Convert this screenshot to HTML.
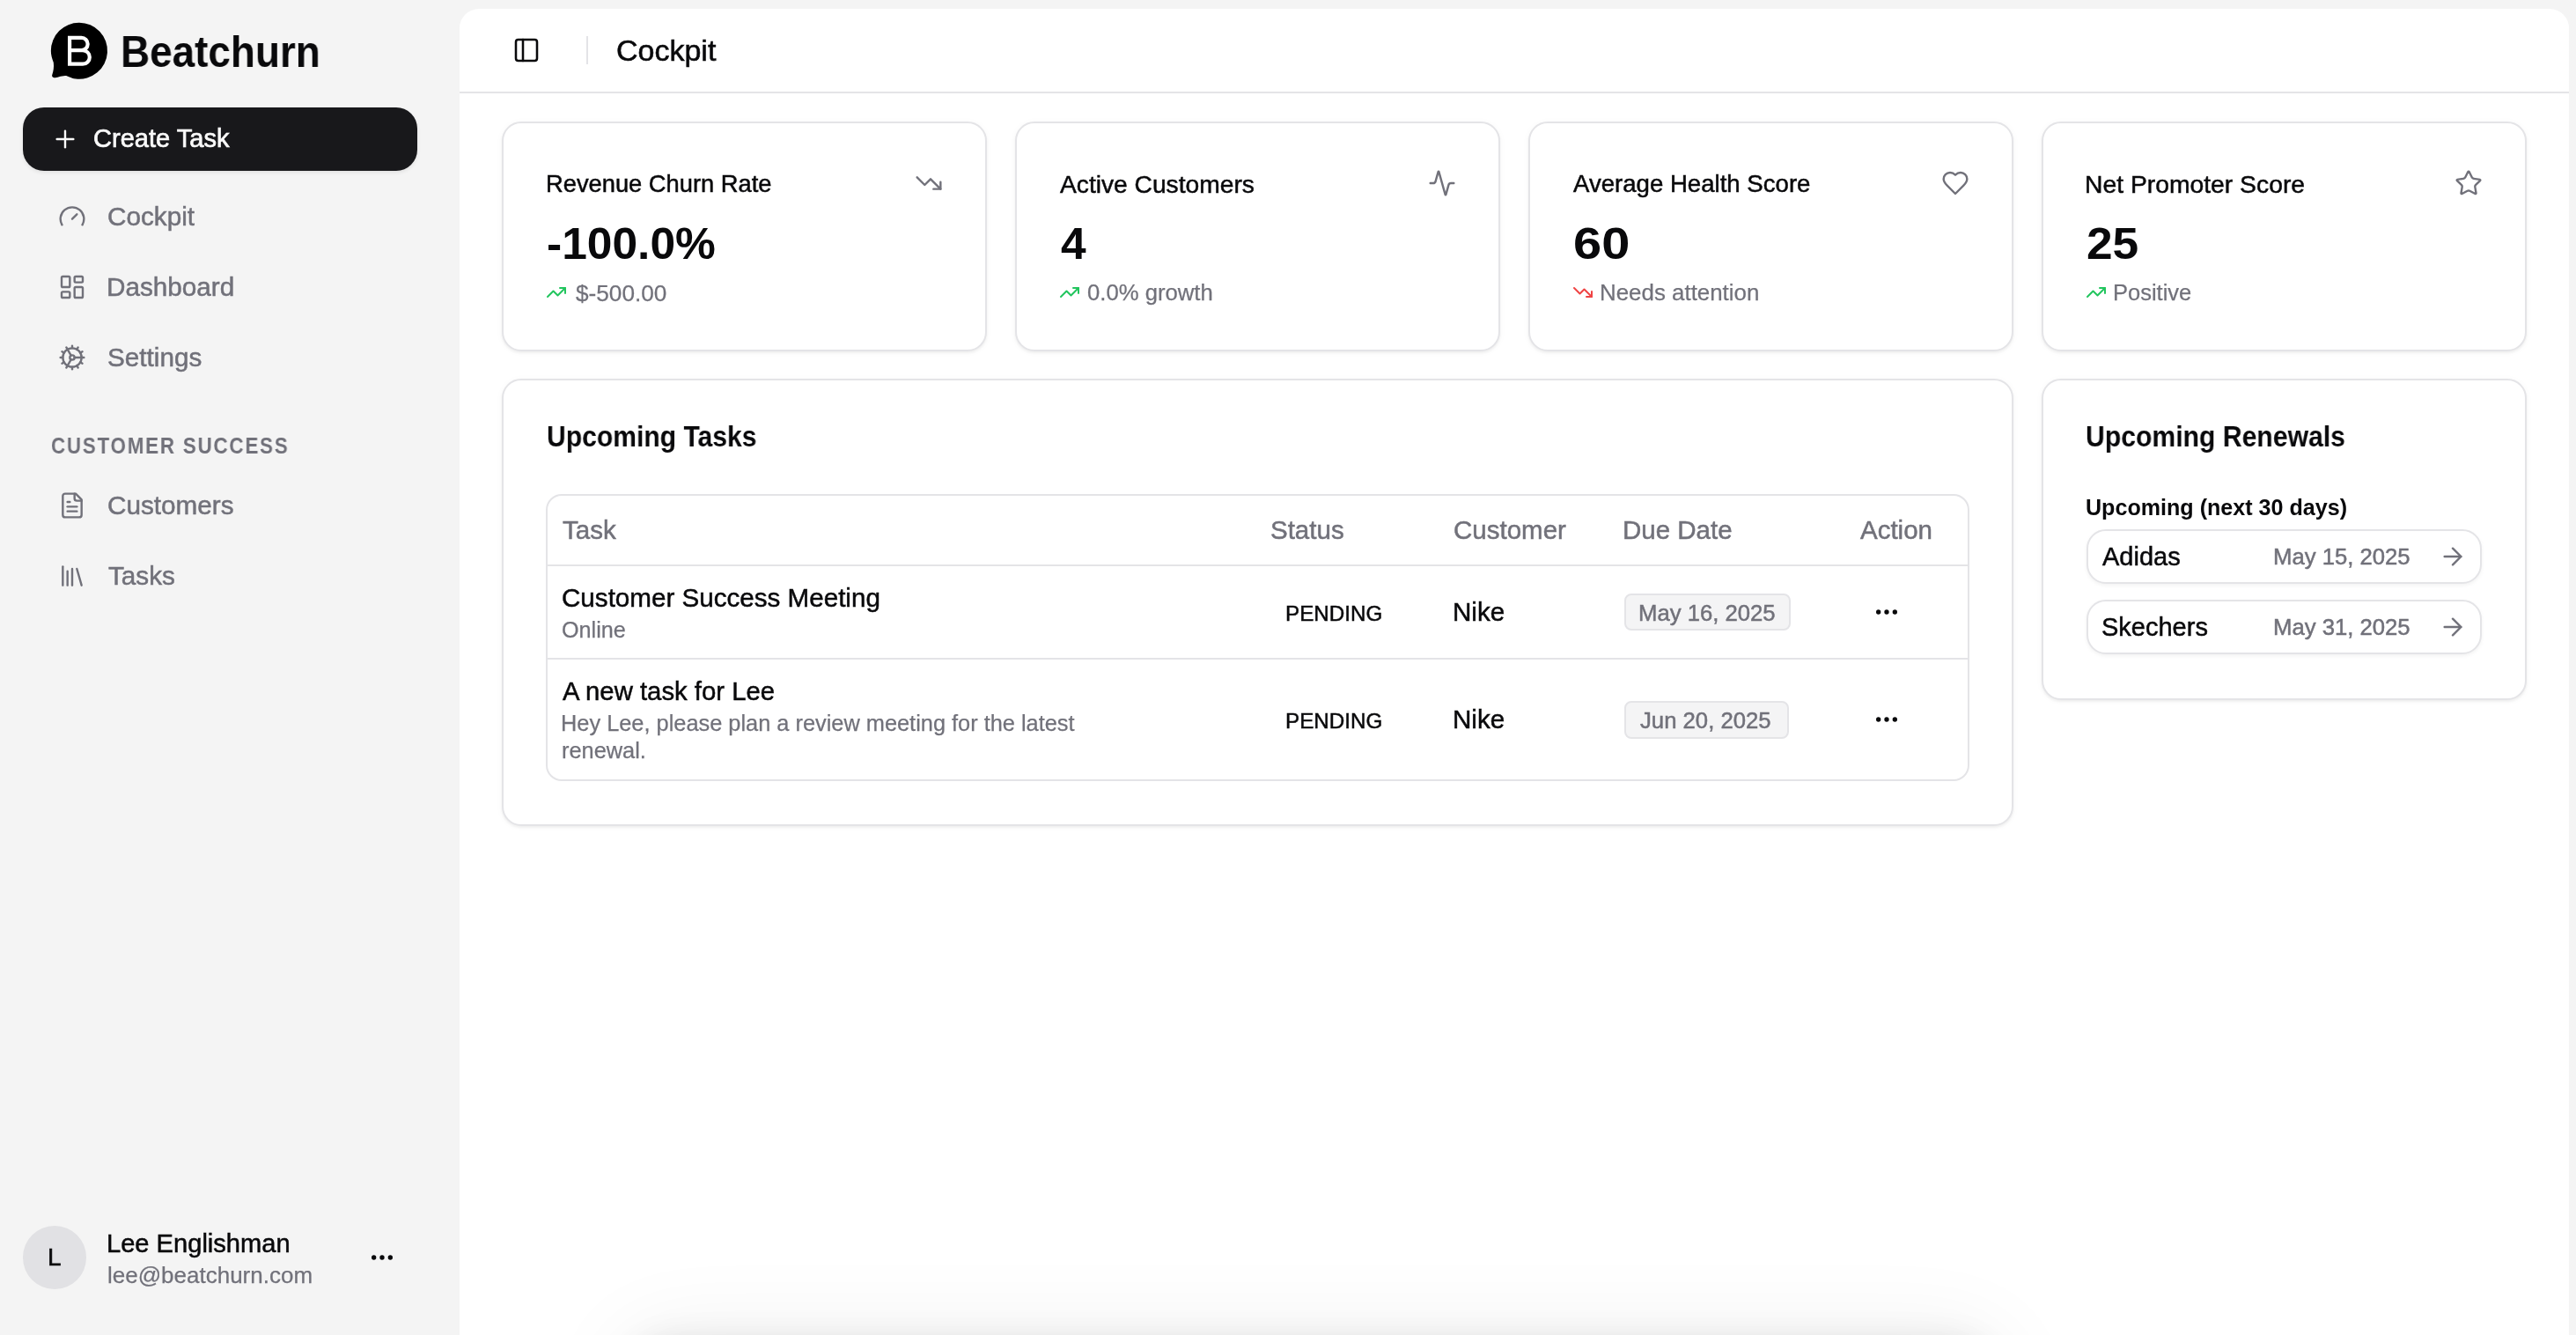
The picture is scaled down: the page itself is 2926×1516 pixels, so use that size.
<!DOCTYPE html>
<html><head><meta charset="utf-8"><title>Beatchurn - Cockpit</title>
<style>
html,body{margin:0;padding:0;}
body{width:2926px;height:1516px;overflow:hidden;position:relative;background:#f4f4f4;font-family:"Liberation Sans",sans-serif;}
.t{position:absolute;white-space:nowrap;line-height:1;will-change:transform;}
.b{position:absolute;}
.i{position:absolute;overflow:visible;}
</style></head><body>
<div class="b" style="left:522px;top:10px;width:2396px;height:1690px;background:#fff;border-radius:22px;"></div>
<svg class="i" style="left:0;top:0;width:200px;height:100px" viewBox="0 0 200 100">
<path d="M89.85,25.75 A32,32 0 1 1 86,89.5 C80,88.5 77,85.8 74,85.9 C69,86 64,88.5 61.5,88.3 C59.5,88.1 58.6,86.5 59.3,84.8 C60.6,81 61.5,76 60.8,70.9 C59,66.5 57.85,62 57.85,57.75 A32,32 0 0 1 89.85,25.75 Z" fill="#000"/>
<path d="M79.1,42.8 H92.5 A7.15,7.15 0 0 1 92.5,57.1 H79.1 Z M79.1,57.1 H94 A7.8,7.8 0 0 1 94,72.7 H79.1 Z" fill="none" stroke="#fff" stroke-width="4.2" stroke-linejoin="miter"/>
</svg>
<div class="b" style="left:522px;top:104px;width:2396px;height:2px;background:#e4e4e7;"></div>
<div class="b" style="left:666px;top:41.3px;width:2px;height:31.5px;background:#e4e4e7;"></div>
<div class="b" style="left:26px;top:122px;width:448px;height:72px;background:#18181b;border-radius:24px;box-shadow:0 2px 4px rgba(0,0,0,0.08);"></div>
<div class="b" style="left:26.1px;top:1392.1px;width:71.6px;height:71.6px;background:#e1e1e4;border-radius:50%;"></div>
<div class="b" style="left:569.7px;top:138px;width:550.9px;height:260.5px;background:#fff;border:2px solid #e4e4e7;border-radius:22px;box-shadow:0 2px 3px rgba(0,0,0,0.05), 0 1px 8px rgba(0,0,0,0.03);box-sizing:border-box;"></div>
<div class="b" style="left:1152.9px;top:138px;width:550.9px;height:260.5px;background:#fff;border:2px solid #e4e4e7;border-radius:22px;box-shadow:0 2px 3px rgba(0,0,0,0.05), 0 1px 8px rgba(0,0,0,0.03);box-sizing:border-box;"></div>
<div class="b" style="left:1736.1px;top:138px;width:550.9px;height:260.5px;background:#fff;border:2px solid #e4e4e7;border-radius:22px;box-shadow:0 2px 3px rgba(0,0,0,0.05), 0 1px 8px rgba(0,0,0,0.03);box-sizing:border-box;"></div>
<div class="b" style="left:2319px;top:138px;width:550.9px;height:260.5px;background:#fff;border:2px solid #e4e4e7;border-radius:22px;box-shadow:0 2px 3px rgba(0,0,0,0.05), 0 1px 8px rgba(0,0,0,0.03);box-sizing:border-box;"></div>
<div class="b" style="left:569.7px;top:430px;width:1717.5px;height:507.5px;background:#fff;border:2px solid #e4e4e7;border-radius:22px;box-shadow:0 2px 3px rgba(0,0,0,0.05), 0 1px 8px rgba(0,0,0,0.03);box-sizing:border-box;"></div>
<div class="b" style="left:2319px;top:430px;width:550.9px;height:364.75px;background:#fff;border:2px solid #e4e4e7;border-radius:22px;box-shadow:0 2px 3px rgba(0,0,0,0.05), 0 1px 8px rgba(0,0,0,0.03);box-sizing:border-box;"></div>
<div class="b" style="left:620.25px;top:560.5px;width:1616.35px;height:326.5px;border:2px solid #e4e4e7;border-radius:18px;box-sizing:border-box;"></div>
<div class="b" style="left:622.25px;top:641px;width:1612.35px;height:2px;background:#e4e4e7;"></div>
<div class="b" style="left:622.25px;top:747px;width:1612.35px;height:2px;background:#e4e4e7;"></div>
<div class="b" style="left:1844.8px;top:673.5px;width:189.4px;height:42.9px;background:#f4f4f5;border:2px solid #e4e4e7;border-radius:8px;box-sizing:border-box;"></div>
<div class="b" style="left:1844.8px;top:795.8px;width:186.9px;height:42.9px;background:#f4f4f5;border:2px solid #e4e4e7;border-radius:8px;box-sizing:border-box;"></div>
<div class="b" style="left:2370px;top:600.6px;width:449.1px;height:62.1px;background:#fff;border:2px solid #e4e4e7;border-radius:22px;box-sizing:border-box;box-shadow:0 2px 4px rgba(0,0,0,0.05);"></div>
<div class="b" style="left:2370px;top:680.7px;width:449.1px;height:62px;background:#fff;border:2px solid #e4e4e7;border-radius:22px;box-sizing:border-box;box-shadow:0 2px 4px rgba(0,0,0,0.05);"></div>
<div class="b" style="left:720px;top:1530px;width:1540px;height:110px;background:#fff;border-radius:40px;box-shadow:0 0 40px 4px rgba(0,0,0,0.12), 0 0 100px 20px rgba(0,0,0,0.06);"></div>
<svg class="i" style="left:57.7px;top:141.7px;width:32px;height:32px" viewBox="0 0 24 24" fill="none" stroke="#fafafa" stroke-width="1.8" stroke-linecap="round" stroke-linejoin="round"><path d="M5 12h14"/><path d="M12 5v14"/></svg>
<svg class="i" style="left:66px;top:230px;width:32px;height:32px" viewBox="0 0 24 24" fill="none" stroke="#71717a" stroke-width="1.8" stroke-linecap="round" stroke-linejoin="round"><path d="m12 14 4-4"/><path d="M3.34 19a10 10 0 1 1 17.32 0"/></svg>
<svg class="i" style="left:66px;top:310px;width:32px;height:32px" viewBox="0 0 24 24" fill="none" stroke="#71717a" stroke-width="1.8" stroke-linecap="round" stroke-linejoin="round"><rect width="7" height="9" x="3" y="3" rx="1"/><rect width="7" height="5" x="14" y="3" rx="1"/><rect width="7" height="9" x="14" y="12" rx="1"/><rect width="7" height="5" x="3" y="16" rx="1"/></svg>
<svg class="i" style="left:66px;top:390px;width:32px;height:32px" viewBox="0 0 24 24" fill="none" stroke="#71717a" stroke-width="1.8" stroke-linecap="round" stroke-linejoin="round"><path d="M12 20a8 8 0 1 0 0-16 8 8 0 0 0 0 16Z"/><path d="M12 14a2 2 0 1 0 0-4 2 2 0 0 0 0 4Z"/><path d="M12 2v2"/><path d="M12 22v-2"/><path d="m17 20.66-1-1.73"/><path d="M11 10.27 7 3.34"/><path d="m20.66 17-1.73-1"/><path d="m3.34 7 1.73 1"/><path d="M14 12h8"/><path d="M2 12h2"/><path d="m20.66 7-1.73 1"/><path d="m3.34 17 1.73-1"/><path d="m17 3.34-1 1.73"/><path d="m11 13.73-4 6.93"/></svg>
<svg class="i" style="left:66px;top:557.5px;width:32px;height:32px" viewBox="0 0 24 24" fill="none" stroke="#71717a" stroke-width="1.8" stroke-linecap="round" stroke-linejoin="round"><path d="M15 2H6a2 2 0 0 0-2 2v16a2 2 0 0 0 2 2h12a2 2 0 0 0 2-2V7Z"/><path d="M14 2v4a2 2 0 0 0 2 2h4"/><path d="M10 9H8"/><path d="M16 13H8"/><path d="M16 17H8"/></svg>
<svg class="i" style="left:66px;top:638px;width:32px;height:32px" viewBox="0 0 24 24" fill="none" stroke="#71717a" stroke-width="1.8" stroke-linecap="round" stroke-linejoin="round"><path d="m16 6 4 14"/><path d="M12 6v14"/><path d="M8 8v12"/><path d="M4 4v16"/></svg>
<svg class="i" style="left:418px;top:1412px;width:32px;height:32px" viewBox="0 0 24 24" fill="none" stroke="#09090b" stroke-width="2" stroke-linecap="round" stroke-linejoin="round"><circle cx="12" cy="12" r="1"/><circle cx="19" cy="12" r="1"/><circle cx="5" cy="12" r="1"/></svg>
<svg class="i" style="left:582.2px;top:40.8px;width:32px;height:32px" viewBox="0 0 24 24" fill="none" stroke="#09090b" stroke-width="1.9" stroke-linecap="round" stroke-linejoin="round"><rect width="18" height="18" x="3" y="3" rx="2"/><path d="M9 3v18"/></svg>
<svg class="i" style="left:1038.8px;top:192px;width:32px;height:32px" viewBox="0 0 24 24" fill="none" stroke="#71717a" stroke-width="1.8" stroke-linecap="round" stroke-linejoin="round"><polyline points="22 17 13.5 8.5 8.5 13.5 2 7"/><polyline points="16 17 22 17 22 11"/></svg>
<svg class="i" style="left:1621.5px;top:192px;width:32px;height:32px" viewBox="0 0 24 24" fill="none" stroke="#71717a" stroke-width="1.8" stroke-linecap="round" stroke-linejoin="round"><path d="M22 12h-2.48a2 2 0 0 0-1.93 1.46l-2.35 8.36a.25.25 0 0 1-.48 0L9.24 2.18a.25.25 0 0 0-.48 0l-2.35 8.36A2 2 0 0 1 4.49 12H2"/></svg>
<svg class="i" style="left:2204.9px;top:192px;width:32px;height:32px" viewBox="0 0 24 24" fill="none" stroke="#71717a" stroke-width="1.8" stroke-linecap="round" stroke-linejoin="round"><path d="M19 14c1.49-1.46 3-3.21 3-5.5A5.5 5.5 0 0 0 16.5 3c-1.76 0-3 .5-4.5 2-1.5-1.5-2.74-2-4.5-2A5.5 5.5 0 0 0 2 8.5c0 2.3 1.5 4.05 3 5.5l7 7Z"/></svg>
<svg class="i" style="left:2788.3px;top:192px;width:32px;height:32px" viewBox="0 0 24 24" fill="none" stroke="#71717a" stroke-width="1.8" stroke-linecap="round" stroke-linejoin="round"><path d="M11.525 2.295a.53.53 0 0 1 .95 0l2.31 4.679a2.123 2.123 0 0 0 1.595 1.16l5.166.756a.53.53 0 0 1 .294.904l-3.736 3.638a2.123 2.123 0 0 0-.611 1.878l.882 5.14a.53.53 0 0 1-.771.56l-4.618-2.428a2.122 2.122 0 0 0-1.973 0L6.396 21.01a.53.53 0 0 1-.77-.56l.881-5.139a2.122 2.122 0 0 0-.611-1.879L2.16 9.795a.53.53 0 0 1 .294-.906l5.165-.755a2.122 2.122 0 0 0 1.597-1.16z"/></svg>
<svg class="i" style="left:620px;top:320px;width:24px;height:24px" viewBox="0 0 24 24" fill="none" stroke="#22c55e" stroke-width="2" stroke-linecap="round" stroke-linejoin="round"><polyline points="22 7 13.5 15.5 8.5 10.5 2 17"/><polyline points="16 7 22 7 22 13"/></svg>
<svg class="i" style="left:1202.5px;top:320px;width:24px;height:24px" viewBox="0 0 24 24" fill="none" stroke="#22c55e" stroke-width="2" stroke-linecap="round" stroke-linejoin="round"><polyline points="22 7 13.5 15.5 8.5 10.5 2 17"/><polyline points="16 7 22 7 22 13"/></svg>
<svg class="i" style="left:1785.5px;top:320px;width:24px;height:24px" viewBox="0 0 24 24" fill="none" stroke="#ef4444" stroke-width="2" stroke-linecap="round" stroke-linejoin="round"><polyline points="22 17 13.5 8.5 8.5 13.5 2 7"/><polyline points="16 17 22 17 22 11"/></svg>
<svg class="i" style="left:2368.5px;top:320px;width:24px;height:24px" viewBox="0 0 24 24" fill="none" stroke="#22c55e" stroke-width="2" stroke-linecap="round" stroke-linejoin="round"><polyline points="22 7 13.5 15.5 8.5 10.5 2 17"/><polyline points="16 7 22 7 22 13"/></svg>
<svg class="i" style="left:2127px;top:679px;width:32px;height:32px" viewBox="0 0 24 24" fill="none" stroke="#09090b" stroke-width="2" stroke-linecap="round" stroke-linejoin="round"><circle cx="12" cy="12" r="1"/><circle cx="19" cy="12" r="1"/><circle cx="5" cy="12" r="1"/></svg>
<svg class="i" style="left:2127px;top:801px;width:32px;height:32px" viewBox="0 0 24 24" fill="none" stroke="#09090b" stroke-width="2" stroke-linecap="round" stroke-linejoin="round"><circle cx="12" cy="12" r="1"/><circle cx="19" cy="12" r="1"/><circle cx="5" cy="12" r="1"/></svg>
<svg class="i" style="left:2770px;top:616px;width:32px;height:32px" viewBox="0 0 24 24" fill="none" stroke="#71717a" stroke-width="1.8" stroke-linecap="round" stroke-linejoin="round"><path d="M5 12h14"/><path d="m12 5 7 7-7 7"/></svg>
<svg class="i" style="left:2770px;top:696px;width:32px;height:32px" viewBox="0 0 24 24" fill="none" stroke="#71717a" stroke-width="1.8" stroke-linecap="round" stroke-linejoin="round"><path d="M5 12h14"/><path d="m12 5 7 7-7 7"/></svg>
<div class="t" style="left:137.22px;top:34.39px;font-size:49.5px;font-weight:bold;color:#09090b;transform:scaleX(0.9267);transform-origin:0 0;">Beatchurn</div>
<div class="t" style="left:105.80px;top:143.45px;font-size:29.0px;font-weight:normal;color:#fafafa;transform:scaleX(1.0024);transform-origin:0 0;-webkit-text-stroke:0.7px #fafafa;">Create Task</div>
<div class="t" style="left:121.70px;top:230.85px;font-size:29.7px;font-weight:normal;color:#71717a;-webkit-text-stroke:0.5px #71717a;">Cockpit</div>
<div class="t" style="left:120.70px;top:310.65px;font-size:29.7px;font-weight:normal;color:#71717a;-webkit-text-stroke:0.5px #71717a;">Dashboard</div>
<div class="t" style="left:121.70px;top:390.85px;font-size:29.7px;font-weight:normal;color:#71717a;-webkit-text-stroke:0.5px #71717a;">Settings</div>
<div class="t" style="left:121.70px;top:559.05px;font-size:29.7px;font-weight:normal;color:#71717a;-webkit-text-stroke:0.5px #71717a;">Customers</div>
<div class="t" style="left:122.70px;top:638.85px;font-size:29.7px;font-weight:normal;color:#71717a;-webkit-text-stroke:0.5px #71717a;">Tasks</div>
<div class="t" style="left:57.91px;top:494.23px;font-size:25px;font-weight:bold;color:#71717a;transform:scaleX(0.8944);transform-origin:0 0;letter-spacing:2px;">CUSTOMER SUCCESS</div>
<div class="t" style="left:53.50px;top:1414.29px;font-size:28px;font-weight:normal;color:#09090b;-webkit-text-stroke:0.6px #09090b;">L</div>
<div class="t" style="left:120.50px;top:1397.86px;font-size:29.1px;font-weight:normal;color:#09090b;-webkit-text-stroke:0.5px #09090b;">Lee Englishman</div>
<div class="t" style="left:121.50px;top:1434.99px;font-size:26px;font-weight:normal;color:#71717a;-webkit-text-stroke:0.25px #71717a;">lee@beatchurn.com</div>
<div class="t" style="left:700.10px;top:40.21px;font-size:34px;font-weight:normal;color:#09090b;-webkit-text-stroke:0.55px #09090b;">Cockpit</div>
<div class="t" style="left:619.50px;top:195.49px;font-size:27.3px;font-weight:normal;color:#09090b;-webkit-text-stroke:0.5px #09090b;">Revenue Churn Rate</div>
<div class="t" style="left:621.46px;top:251.89px;font-size:49.5px;font-weight:bold;color:#09090b;transform:scaleX(1.0408);transform-origin:0 0;">-100.0%</div>
<div class="t" style="left:653.80px;top:319.62px;font-size:26.2px;font-weight:normal;color:#71717a;-webkit-text-stroke:0.25px #71717a;">$-500.00</div>
<div class="t" style="left:1204.00px;top:194.72px;font-size:28.2px;font-weight:normal;color:#09090b;-webkit-text-stroke:0.5px #09090b;">Active Customers</div>
<div class="t" style="left:1205.00px;top:251.89px;font-size:49.5px;font-weight:bold;color:#09090b;transform:scaleX(1.0393);transform-origin:0 0;">4</div>
<div class="t" style="left:1235.30px;top:320.04px;font-size:25.7px;font-weight:normal;color:#71717a;-webkit-text-stroke:0.25px #71717a;">0.0% growth</div>
<div class="t" style="left:1787.00px;top:195.23px;font-size:27.6px;font-weight:normal;color:#09090b;-webkit-text-stroke:0.5px #09090b;">Average Health Score</div>
<div class="t" style="left:1786.83px;top:251.89px;font-size:49.5px;font-weight:bold;color:#09090b;transform:scaleX(1.1670);transform-origin:0 0;">60</div>
<div class="t" style="left:1817.30px;top:319.87px;font-size:25.9px;font-weight:normal;color:#71717a;-webkit-text-stroke:0.25px #71717a;">Needs attention</div>
<div class="t" style="left:2368.00px;top:194.64px;font-size:28.3px;font-weight:normal;color:#09090b;-webkit-text-stroke:0.5px #09090b;">Net Promoter Score</div>
<div class="t" style="left:2369.92px;top:251.89px;font-size:49.5px;font-weight:bold;color:#09090b;transform:scaleX(1.0760);transform-origin:0 0;">25</div>
<div class="t" style="left:2400.30px;top:320.21px;font-size:25.5px;font-weight:normal;color:#71717a;-webkit-text-stroke:0.25px #71717a;">Positive</div>
<div class="t" style="left:620.78px;top:480.43px;font-size:32.8px;font-weight:bold;color:#09090b;transform:scaleX(0.9171);transform-origin:0 0;">Upcoming Tasks</div>
<div class="t" style="left:638.80px;top:586.82px;font-size:29.5px;font-weight:normal;color:#71717a;-webkit-text-stroke:0.5px #71717a;">Task</div>
<div class="t" style="left:1443.40px;top:586.82px;font-size:29.5px;font-weight:normal;color:#71717a;-webkit-text-stroke:0.5px #71717a;">Status</div>
<div class="t" style="left:1650.60px;top:586.82px;font-size:29.5px;font-weight:normal;color:#71717a;-webkit-text-stroke:0.5px #71717a;">Customer</div>
<div class="t" style="left:1842.80px;top:586.82px;font-size:29.5px;font-weight:normal;color:#71717a;-webkit-text-stroke:0.5px #71717a;">Due Date</div>
<div class="t" style="left:2112.80px;top:586.82px;font-size:29.5px;font-weight:normal;color:#71717a;-webkit-text-stroke:0.5px #71717a;">Action</div>
<div class="t" style="left:637.80px;top:663.74px;font-size:29.6px;font-weight:normal;color:#09090b;-webkit-text-stroke:0.5px #09090b;">Customer Success Meeting</div>
<div class="t" style="left:637.80px;top:703.26px;font-size:25.2px;font-weight:normal;color:#71717a;-webkit-text-stroke:0.25px #71717a;">Online</div>
<div class="t" style="left:1460.10px;top:684.81px;font-size:24.2px;font-weight:normal;color:#09090b;-webkit-text-stroke:0.5px #09090b;">PENDING</div>
<div class="t" style="left:1649.60px;top:679.84px;font-size:29.6px;font-weight:normal;color:#09090b;-webkit-text-stroke:0.5px #09090b;">Nike</div>
<div class="t" style="left:1861.00px;top:683.64px;font-size:25.7px;font-weight:normal;color:#71717a;-webkit-text-stroke:0.5px #71717a;">May 16, 2025</div>
<div class="t" style="left:638.80px;top:769.69px;font-size:29.3px;font-weight:normal;color:#09090b;-webkit-text-stroke:0.5px #09090b;">A new task for Lee</div>
<div class="t" style="left:636.80px;top:808.53px;font-size:25.36px;font-weight:normal;color:#71717a;-webkit-text-stroke:0.25px #71717a;">Hey Lee, please plan a review meeting for the latest</div>
<div class="t" style="left:637.80px;top:839.83px;font-size:25.36px;font-weight:normal;color:#71717a;-webkit-text-stroke:0.25px #71717a;">renewal.</div>
<div class="t" style="left:1460.10px;top:807.11px;font-size:24.2px;font-weight:normal;color:#09090b;-webkit-text-stroke:0.5px #09090b;">PENDING</div>
<div class="t" style="left:1649.60px;top:802.14px;font-size:29.6px;font-weight:normal;color:#09090b;-webkit-text-stroke:0.5px #09090b;">Nike</div>
<div class="t" style="left:1863.00px;top:805.64px;font-size:25.7px;font-weight:normal;color:#71717a;-webkit-text-stroke:0.5px #71717a;">Jun 20, 2025</div>
<div class="t" style="left:2369.08px;top:480.23px;font-size:32.8px;font-weight:bold;color:#09090b;transform:scaleX(0.9193);transform-origin:0 0;">Upcoming Renewals</div>
<div class="t" style="left:2369.00px;top:563.85px;font-size:25.1px;font-weight:bold;color:#09090b;">Upcoming (next 30 days)</div>
<div class="t" style="left:2388.30px;top:617.65px;font-size:29px;font-weight:normal;color:#09090b;-webkit-text-stroke:0.5px #09090b;">Adidas</div>
<div class="t" style="left:2582.20px;top:620.04px;font-size:25.7px;font-weight:normal;color:#71717a;-webkit-text-stroke:0.5px #71717a;">May 15, 2025</div>
<div class="t" style="left:2386.60px;top:697.75px;font-size:29px;font-weight:normal;color:#09090b;-webkit-text-stroke:0.5px #09090b;">Skechers</div>
<div class="t" style="left:2582.00px;top:699.84px;font-size:25.7px;font-weight:normal;color:#71717a;-webkit-text-stroke:0.5px #71717a;">May 31, 2025</div>
</body></html>
